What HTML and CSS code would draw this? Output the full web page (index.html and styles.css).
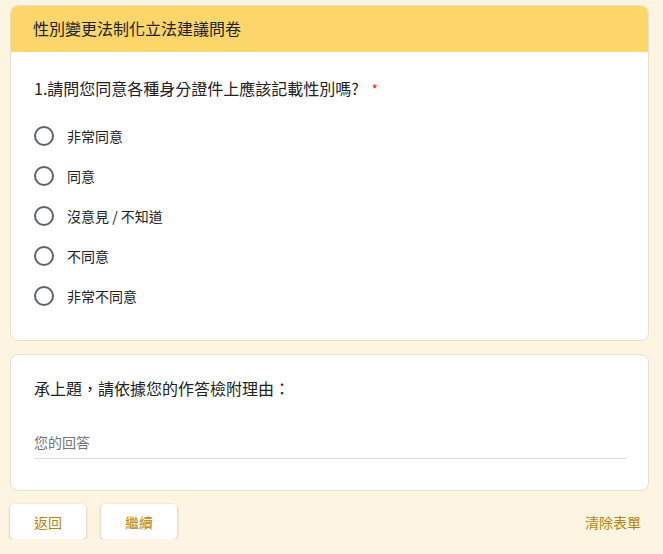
FILE: index.html
```html
<!DOCTYPE html>
<html lang="zh-Hant">
<head>
  <meta charset="utf-8">
  <title>性別變更法制化立法建議問卷</title>
  <link rel="stylesheet" href="styles.css">
</head>
<body>

<div class="form">
  <!-- Question 1 -->
  <div class="card">
    <div class="card-head">性別變更法制化立法建議問卷</div>
    <div class="card-body">
      <div class="question">1.請問您同意各種身分證件上應該記載性別嗎? <span class="req">*</span></div>
      <ul class="options">
        <li><span class="radio"></span>非常同意</li>
        <li><span class="radio"></span>同意</li>
        <li><span class="radio"></span>沒意見 / 不知道</li>
        <li><span class="radio"></span>不同意</li>
        <li><span class="radio"></span>非常不同意</li>
      </ul>
    </div>
  </div>

  <!-- Reason -->
  <div class="card">
    <div class="card-body reason">
      <div class="question">承上題，請依據您的作答檢附理由：</div>
      <div class="answer">您的回答</div>
    </div>
  </div>

  <div class="actions">
    <button class="btn">返回</button>
    <button class="btn">繼續</button>
    <span class="clear">清除表單</span>
  </div>
</div>

</body>
</html>
```

FILE: styles.css
```css
body {
  margin: 0;
  background: #fdf5e1;
  font-family: "Noto Sans CJK TC", "Noto Sans", sans-serif;
  color: #202124;
}
.form {
  margin: 5px 14px 0 10px;
}
.card {
  background: #fff;
  border: 1px solid #e6e0d0;
  border-radius: 8px;
  overflow: hidden;
  margin-bottom: 13px;
}
.card-head {
  background: #fdd66b;
  height: 47px;
  line-height: 47px;
  padding-left: 23px;
  font-size: 16px;
  margin: -1px -1px 0 -1px;
}
.card-body {
  padding: 25px 23px 24px;
}
.question {
  font-size: 16px;
  line-height: 22px;
}
.req {
  color: #d93025;
  font-size: 14px;
  margin-left: 9px;
}
.options {
  list-style: none;
  margin: 16px 0 0;
  padding: 0;
}
.options li {
  display: flex;
  align-items: center;
  height: 40px;
  font-size: 14px;
}
.radio {
  width: 16px;
  height: 16px;
  border: 2px solid #5f6368;
  border-radius: 50%;
  margin-right: 13px;
}
.reason {
  padding-top: 22px;
  padding-bottom: 31px;
}
.answer {
  margin-top: 33px;
  width: 592px;
  font-size: 14px;
  color: #70757a;
  padding-bottom: 6px;
  border-bottom: 1px solid #dadce0;
}
.actions {
  display: flex;
  align-items: center;
  gap: 15px;
}
.btn {
  font-family: inherit;
  font-size: 14px;
  color: #b5850b;
  background: #fff;
  border: none;
  border-radius: 4px;
  height: 35px;
  width: 76px;
  box-shadow: 0 1px 3px rgba(0,0,0,0.25);
}
.clear {
  margin-left: auto;
  margin-right: 8px;
  font-size: 14px;
  color: #b5850b;
}
```
